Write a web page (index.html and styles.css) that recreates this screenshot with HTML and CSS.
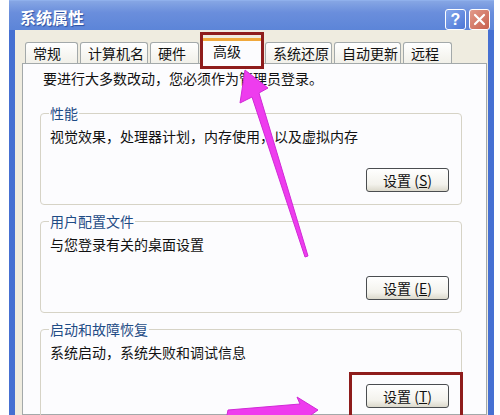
FILE: index.html
```html
<html>
<head>
    <meta charset="UTF-8">
    <meta name="viewport" content="width=device-width, initial-scale=1.0">
    <title>系统属性</title>
    <link rel="stylesheet" href="styles.css">
</head>
<body>

    <div class="window">
        <div class="titlebar">
            <span class="title">系统属性</span>
            <div class="title-btns">
                <span class="tb help">?</span>
                <span class="tb close">
                    <svg width="13" height="13" viewBox="0 0 13 13"><path d="M2 2 L11 11 M11 2 L2 11" stroke="#fff" stroke-width="2.2" stroke-linecap="round"/></svg>
                </span>
            </div>
        </div>

        <div class="client">
            <div class="tabs">
                <div class="tab t-narrow">常规</div>
                <div class="tab t-wide">计算机名</div>
                <div class="tab t-small">硬件</div>
                <div class="tab active">高级</div>
                <div class="tab t-mid">系统还原</div>
                <div class="tab t-mid">自动更新</div>
                <div class="tab t-small">远程</div>
            </div>

            <div class="panel">
                <p class="intro">要进行大多数改动，您必须作为管理员登录。</p>

                <fieldset class="group">
                    <legend>性能</legend>
                    <p class="desc">视觉效果，处理器计划，内存使用，以及虚拟内存</p>
                    <div class="btn-row"><button class="btn">设置 (<u>S</u>)</button></div>
                </fieldset>

                <fieldset class="group">
                    <legend>用户配置文件</legend>
                    <p class="desc">与您登录有关的桌面设置</p>
                    <div class="btn-row"><button class="btn">设置 (<u>E</u>)</button></div>
                </fieldset>

                <fieldset class="group">
                    <legend>启动和故障恢复</legend>
                    <p class="desc">系统启动，系统失败和调试信息</p>
                    <div class="btn-row"><button class="btn">设置 (<u>T</u>)</button></div>
                </fieldset>
            </div>
        </div>
    </div>

    <!-- annotations drawn on top of the screenshot -->
    <div class="mark mark-tab"></div>
    <div class="mark mark-btn"></div>
    <svg class="arrows" width="500" height="415" viewBox="0 0 500 415">
        <polygon points="245,70 268,88 259,93 308,256 305,257 252,97 240,103" fill="#ee3cee" stroke="#d02ad6" stroke-width="1"/>
        <polygon points="318,410 297,397 300,404 228,410 226,420 304,420" fill="#ee3cee" stroke="#d02ad6" stroke-width="1"/>
    </svg>

</body>
</html>
```

FILE: styles.css
```css
body {
    margin: 0;
    background: #ffffff;
    font-family: "Noto Sans CJK SC", "Liberation Sans", sans-serif;
    font-size: 14px;
    position: relative;
    overflow: hidden;
    height: 415px;
}
.window {
    margin-left: 9px;
    width: 485px;
    height: 415px;
    box-sizing: border-box;
    padding: 0 6px;
    background: linear-gradient(to right, #4670d2, #3a66cc 50%, #4670d2);
    border-top: 1px solid #8fb0ec;
}
.titlebar {
    height: 29px;
    margin: 0 -6px;
    padding: 0 4px 0 11px;
    display: flex;
    justify-content: space-between;
    align-items: flex-start;
    background: linear-gradient(to bottom, #86a6e4, #6a8edc 40%, #5c85d8);
}
.title {
    color: #ffffff;
    font-weight: bold;
    font-size: 16px;
    line-height: 18px;
    margin-top: 7px;
    text-shadow: 1px 1px 1px #2a4fa0;
}
.title-btns {
    display: flex;
    gap: 3px;
    margin-top: 8px;
}
.tb {
    width: 21px;
    height: 21px;
    box-sizing: border-box;
    border: 1px solid #ffffff;
    border-radius: 3px;
    display: flex;
    align-items: center;
    justify-content: center;
    color: #ffffff;
    font-family: "Liberation Sans", sans-serif;
    font-weight: bold;
    font-size: 16px;
}
.help {
    background: linear-gradient(to bottom right, #86a8ec, #4a76d6);
}
.close {
    background: linear-gradient(to bottom right, #e29a8a, #c8614e);
}
.client {
    height: 386px;
    background: #efece0;
    padding: 0 1px 0 7px;
}
.tabs {
    height: 33px;
    display: flex;
    align-items: flex-end;
    gap: 2px;
    padding-left: 3px;
}
.tab {
    height: 21px;
    box-sizing: border-box;
    border: 1px solid #a3a9aa;
    border-bottom: none;
    border-radius: 3px 3px 0 0;
    background: linear-gradient(to bottom, #ffffff, #f1f0e9);
    padding-left: 7px;
    line-height: 20px;
    color: #111111;
    white-space: nowrap;
}
.t-narrow { width: 53px; }
.t-wide { width: 68px; }
.t-small { width: 49px; }
.t-mid { width: 67px; }
.tab.active {
    width: 62px;
    height: 26px;
    margin-bottom: -1px;
    border-top: 3px solid #f0a83c;
    background: #fcfcfe;
    padding-left: 11px;
    position: relative;
}
.panel {
    height: 352px;
    box-sizing: border-box;
    border: 1px solid #a3a9aa;
    background: #fcfcfe;
    padding: 6px 0 0 17px;
}
.intro {
    margin: 0 0 19px 3px;
    line-height: 16px;
    color: #111111;
}
.group {
    width: 422px;
    box-sizing: border-box;
    margin: 0 0 8px 0;
    padding: 7px 12px 12px 9px;
    border: 1px solid #d6d3c6;
    border-radius: 4px;
}
.group legend {
    padding: 0 1px;
    margin-left: -1px;
    line-height: 16px;
    color: #1f4c86;
}
.desc {
    margin: 0;
    line-height: 16px;
    color: #111111;
}
.btn-row {
    display: flex;
    justify-content: flex-end;
    margin-top: 24px;
}
.btn {
    width: 83px;
    height: 24px;
    box-sizing: border-box;
    border: 1px solid #4a4d50;
    border-radius: 3px;
    background: linear-gradient(to bottom, #ffffff, #f3f2ec 70%, #dcd9cc);
    font-family: "Noto Sans CJK SC", "Liberation Sans", sans-serif;
    font-size: 14px;
    line-height: 20px;
    color: #111111;
    padding: 0;
}
.mark {
    position: absolute;
    border: 3px solid #8e1c1c;
    box-sizing: border-box;
}
.mark-tab {
    left: 200px;
    top: 32px;
    width: 64px;
    height: 37px;
}
.mark-btn {
    left: 349px;
    top: 372px;
    width: 114px;
    height: 60px;
}
.arrows {
    position: absolute;
    left: 0;
    top: 0;
    pointer-events: none;
}
```
